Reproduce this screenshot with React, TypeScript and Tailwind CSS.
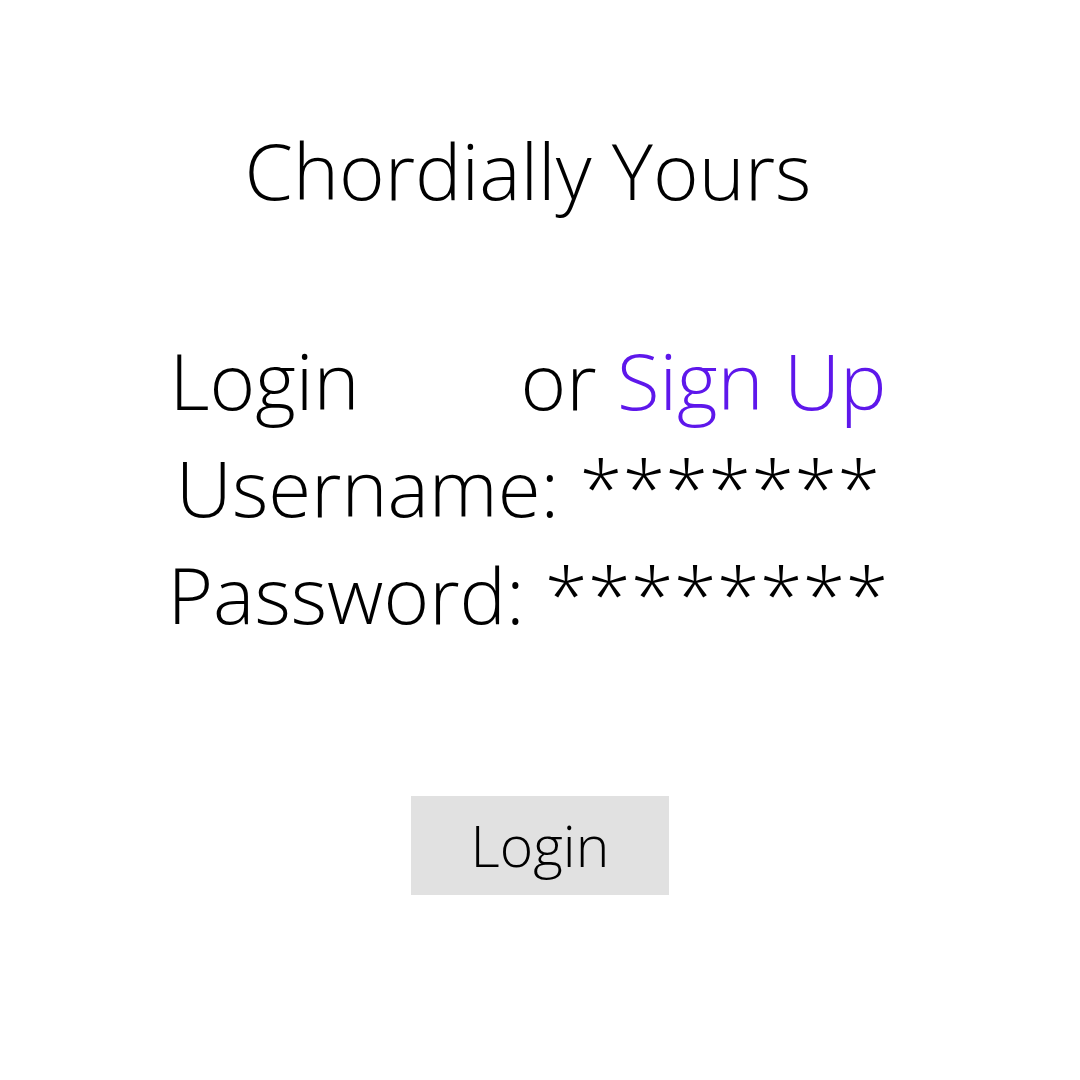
import React from 'react';

const App = () => {
  return (
    <div className="w-[1080px] h-[1080px] bg-white text-black font-light" style={{ fontFamily: '"Open Sans", sans-serif' }}>
      <div className="pr-[24px] pt-[131px] text-center">
        <h1 className="text-[78px] leading-[78px] font-light">Chordially Yours</h1>

        <div className="mt-[118px] text-[78px] leading-[107px]">
          <p>
            Login<span className="inline-block w-[161px]"></span>or <span className="text-[#5e17eb]">Sign Up</span>
          </p>
          <p>Username: *******</p>
          <p>Password: ********</p>
        </div>
      </div>

      <div className="mt-[148px] flex justify-center">
        <button className="w-[258px] h-[99px] bg-[#e1e1e1] text-[57px] font-light text-black">Login</button>
      </div>
    </div>
  );
};

export default App;
